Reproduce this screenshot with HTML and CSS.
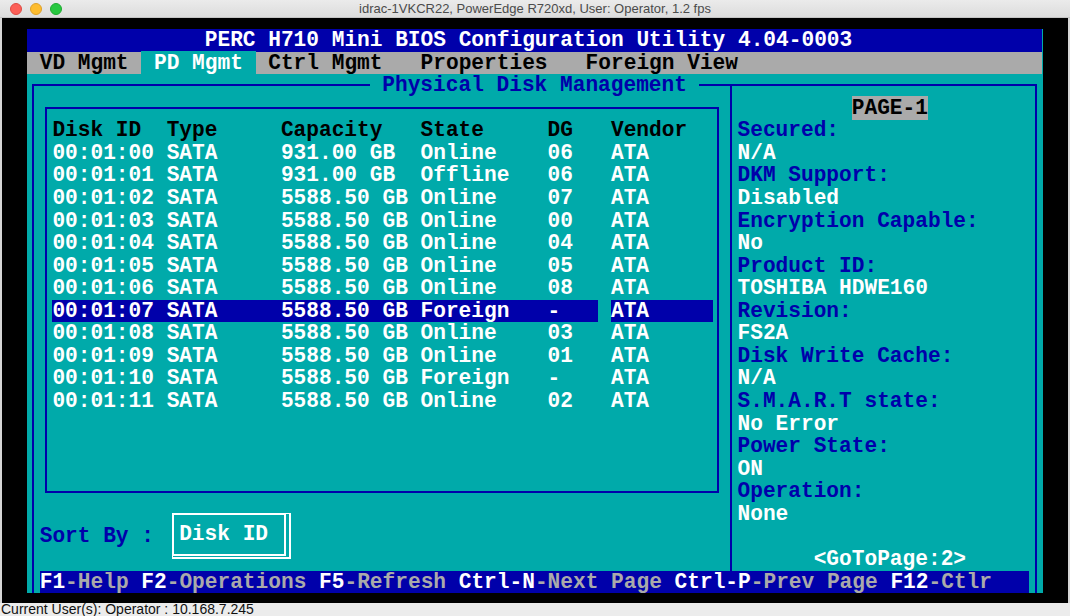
FILE: index.html
```html
<!DOCTYPE html>
<html>
<head>
<meta charset="utf-8">
<title>idrac-1VKCR22</title>
<link rel="stylesheet" href="styles.css">
</head>
<body>
<div class="window">
  <div class="titlebar">
    <div class="lights"><span class="light red"></span><span class="light yellow"></span><span class="light green"></span></div>
    <div class="title">idrac-1VKCR22, PowerEdge R720xd, User: Operator, 1.2 fps</div>
    <div></div>
  </div>
  <div class="viewport">
    <div class="screen">
      <div class="hdr">PERC H710 Mini BIOS Configuration Utility 4.04-0003</div>
      <div class="menu"> VD Mgmt <span class="msel"> PD Mgmt </span> Ctrl Mgmt   Properties   Foreign View</div>
      <div class="frame-outer"></div>
      <div class="frame-divider"></div>
      <div class="frame-table"></div>
      <div class="frame-title"> Physical Disk Management </div>
      <div class="disks">
        <div class="drow head"><span>Disk ID</span><span>Type</span><span>Capacity</span><span>State</span><span>DG</span><span>Vendor</span></div>
        <div class="drow"><span>00:01:00</span><span>SATA</span><span>931.00 GB</span><span>Online</span><span>06</span><span>ATA</span></div>
        <div class="drow"><span>00:01:01</span><span>SATA</span><span>931.00 GB</span><span>Offline</span><span>06</span><span>ATA</span></div>
        <div class="drow"><span>00:01:02</span><span>SATA</span><span>5588.50 GB</span><span>Online</span><span>07</span><span>ATA</span></div>
        <div class="drow"><span>00:01:03</span><span>SATA</span><span>5588.50 GB</span><span>Online</span><span>00</span><span>ATA</span></div>
        <div class="drow"><span>00:01:04</span><span>SATA</span><span>5588.50 GB</span><span>Online</span><span>04</span><span>ATA</span></div>
        <div class="drow"><span>00:01:05</span><span>SATA</span><span>5588.50 GB</span><span>Online</span><span>05</span><span>ATA</span></div>
        <div class="drow"><span>00:01:06</span><span>SATA</span><span>5588.50 GB</span><span>Online</span><span>08</span><span>ATA</span></div>
        <div class="drow sel"><span>00:01:07</span><span>SATA</span><span>5588.50 GB</span><span>Foreign</span><span class="dg">-</span><span>ATA</span></div>
        <div class="drow"><span>00:01:08</span><span>SATA</span><span>5588.50 GB</span><span>Online</span><span>03</span><span>ATA</span></div>
        <div class="drow"><span>00:01:09</span><span>SATA</span><span>5588.50 GB</span><span>Online</span><span>01</span><span>ATA</span></div>
        <div class="drow"><span>00:01:10</span><span>SATA</span><span>5588.50 GB</span><span>Foreign</span><span>-</span><span>ATA</span></div>
        <div class="drow"><span>00:01:11</span><span>SATA</span><span>5588.50 GB</span><span>Online</span><span>02</span><span>ATA</span></div>
      </div>
      <div class="info">
        <div class="pageline"><span class="page">PAGE-1</span></div>
        <div class="lbl">Secured:</div>
        <div class="val">N/A</div>
        <div class="lbl">DKM Support:</div>
        <div class="val">Disabled</div>
        <div class="lbl">Encryption Capable:</div>
        <div class="val">No</div>
        <div class="lbl">Product ID:</div>
        <div class="val">TOSHIBA HDWE160</div>
        <div class="lbl">Revision:</div>
        <div class="val">FS2A</div>
        <div class="lbl">Disk Write Cache:</div>
        <div class="val">N/A</div>
        <div class="lbl">S.M.A.R.T state:</div>
        <div class="val">No Error</div>
        <div class="lbl">Power State:</div>
        <div class="val">ON</div>
        <div class="lbl">Operation:</div>
        <div class="val">None</div>
        <div></div>
        <div class="goto">&lt;GoToPage:2&gt;</div>
      </div>
      <div class="sortlabel">Sort By :</div>
      <div class="sortbox">Disk ID</div>
      <div class="keys"><span class="k">F1</span><span class="d">-Help </span><span class="k">F2</span><span class="d">-Operations </span><span class="k">F5</span><span class="d">-Refresh </span><span class="k">Ctrl-N</span><span class="d">-Next Page </span><span class="k">Ctrl-P</span><span class="d">-Prev Page </span><span class="k">F12</span><span class="d">-Ctlr</span></div>
    </div>
  </div>
  <div class="status">Current User(s): Operator : 10.168.7.245</div>
</div>
</body>
</html>
```
FILE: styles.css
```css
html, body {
  margin: 0;
  padding: 0;
  background: #d9d9d9;
}

.window {
  width: 1070px;
  height: 616px;
  display: flex;
  flex-direction: column;
  overflow: hidden;
}

/* macOS title bar */
.titlebar {
  height: 17px;
  border-bottom: 1px solid #c4c4c4;
  background: linear-gradient(#ebebeb, #dcdcdc);
  display: grid;
  grid-template-columns: 1fr auto 1fr;
  align-items: center;
}

.lights {
  display: flex;
  gap: 8px;
  padding-left: 10px;
}

.light {
  width: 12px;
  height: 12px;
  border-radius: 50%;
  box-sizing: border-box;
}

.red { background: #fc5f57; border: 1px solid #de4a43; }
.yellow { background: #fdbc2e; border: 1px solid #dea129; }
.green { background: #28c840; border: 1px solid #1eaa30; }

.title {
  font-family: "Liberation Sans", Arial, sans-serif;
  font-size: 13px;
  color: #4b4b4b;
  white-space: nowrap;
}

/* console viewport */
.viewport {
  height: 585px;
  box-sizing: border-box;
  background: #000;
  border-left: 2px solid #d6d6d6;
  border-right: 2px solid #d6d6d6;
  padding: 11px 0 0 25px;
}

.screen {
  width: 1016px;
  display: grid;
  grid-template-columns: repeat(80, 12.7px);
  grid-template-rows: repeat(25, 22.57px);
  background: #00aaaa;
  font-family: "Liberation Mono", "DejaVu Sans Mono", monospace;
  font-weight: bold;
  font-size: 21.16px;
  line-height: 22.57px;
  white-space: pre;
  color: #ffffff;
}

.hdr {
  grid-row: 1;
  grid-column: 1 / -1;
  background: #0000aa;
  padding-left: 14ch;
}

.menu {
  grid-row: 2;
  grid-column: 1 / -1;
  background: #aaaaaa;
  color: #000;
}

.msel {
  background: #00aaaa;
  color: #fff;
}

.frame-outer {
  grid-row: 3 / 26;
  grid-column: 1 / -1;
  margin: 10.3px 5.35px 0 5.35px;
  border: 2px solid #0000aa;
  border-bottom: 0;
}

.frame-divider {
  grid-row: 3 / 25;
  grid-column: 56;
  margin: 10.3px 0 0 5.35px;
  border-left: 2px solid #0000aa;
}

.frame-table {
  grid-row: 4 / 22;
  grid-column: 2 / 56;
  margin: 10.3px 5.35px;
  border: 2px solid #0000aa;
}

.frame-title {
  grid-row: 3;
  grid-column: 28 / 54;
  background: #00aaaa;
  color: #0000aa;
}

.disks {
  grid-row: 5 / 18;
  grid-column: 3 / 55;
  display: flex;
  flex-direction: column;
}

.drow {
  display: grid;
  grid-template-columns: 9ch 9ch 11ch 10ch 5ch 8ch;
  height: 22.57px;
}

.drow.head { color: #000; }

.drow.sel span { background: #0000aa; }
.drow.sel .dg { margin-right: 1ch; }

.info {
  grid-row: 4 / 25;
  grid-column: 57 / 80;
  display: grid;
  grid-auto-rows: 22.57px;
}

.pageline { padding-left: 9ch; }

.page {
  background: #aaaaaa;
  color: #000;
}

.lbl { color: #0000aa; }
.val { color: #fff; }
.goto { padding-left: 6ch; color: #fff; }

.sortlabel {
  grid-row: 23;
  grid-column: 2 / 11;
  color: #0000aa;
}

.sortbox {
  grid-row: 22 / 25;
  grid-column: 12 / 22;
  margin: 10px 2.7px 11.7px 5.6px;
  border-top: 2px solid #fff;
  border-left: 2px solid #fff;
  border-right: 7px double #fff;
  border-bottom: 5px double #fff;
  display: flex;
  align-items: center;
  padding-left: 5px;
  padding-bottom: 1px;
}

.keys {
  grid-row: 25;
  grid-column: 2 / 80;
  background: #0000aa;
}

.k { color: #ffffff; }
.d { color: #aaaaaa; }

.status {
  height: 13px;
  background: #ececec;
  font-family: "Liberation Sans", Arial, sans-serif;
  font-size: 14px;
  line-height: 13px;
  color: #111;
  padding-left: 1px;
  overflow: hidden;
  white-space: nowrap;
}
```
